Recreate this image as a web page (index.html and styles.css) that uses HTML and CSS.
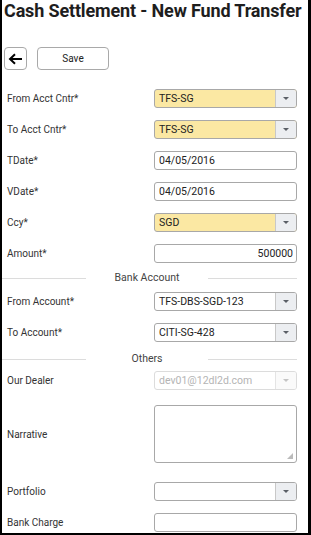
FILE: index.html
```html
<!DOCTYPE html>
<html>
<head>
<meta charset="utf-8">
<link rel="stylesheet" href="styles.css">
</head>
<body>
<div class="frame">
  <h1 class="title">Cash Settlement - New Fund Transfer</h1>
  <div class="toolbar">
    <button class="back" type="button"><svg width="15" height="12" viewBox="0 0 15 12"><path d="M14 6H2.5M7 1.2L2 6l5 4.8" fill="none" stroke="#000" stroke-width="2"/></svg></button>
    <button class="save" type="button">Save</button>
  </div>
  <div class="form">
    <div class="row"><span class="label">From Acct Cntr*</span><div class="field select req"><span class="val">TFS-SG</span><span class="caret"><i></i></span></div></div>
    <div class="row"><span class="label">To Acct Cntr*</span><div class="field select req"><span class="val">TFS-SG</span><span class="caret"><i></i></span></div></div>
    <div class="row"><span class="label">TDate*</span><div class="field"><span class="val">04/05/2016</span></div></div>
    <div class="row"><span class="label">VDate*</span><div class="field"><span class="val">04/05/2016</span></div></div>
    <div class="row"><span class="label">Ccy*</span><div class="field select req"><span class="val">SGD</span><span class="caret"><i></i></span></div></div>
    <div class="row"><span class="label">Amount*</span><div class="field num"><span class="val">500000</span></div></div>
    <div class="divider d1"><span class="line"></span><span class="dtext">Bank Account</span><span class="line"></span></div>
    <div class="row"><span class="label">From Account*</span><div class="field select"><span class="val">TFS-DBS-SGD-123</span><span class="caret"><i></i></span></div></div>
    <div class="row"><span class="label">To Account*</span><div class="field select"><span class="val">CITI-SG-428</span><span class="caret"><i></i></span></div></div>
    <div class="divider d2"><span class="line"></span><span class="dtext">Others</span><span class="line"></span></div>
    <div class="row"><span class="label">Our Dealer</span><div class="field select disabled"><span class="val">dev01@12dl2d.com</span><span class="caret"><i></i></span></div></div>
    <div class="row tall"><span class="label">Narrative</span><div class="field area"><span class="grip"></span></div></div>
    <div class="row"><span class="label">Portfolio</span><div class="field select"><span class="val"></span><span class="caret"><i></i></span></div></div>
    <div class="row"><span class="label">Bank Charge</span><div class="field"><span class="val"></span></div></div>
  </div>
</div>
</body>
</html>
```
FILE: styles.css
```css
html, body {
  margin: 0;
  padding: 0;
  background: #fff;
}
body {
  font-family: Roboto, "Liberation Sans", Arial, sans-serif;
  color: #333;
  overflow: hidden;
}
.frame {
  width: 311px;
  height: 535px;
  box-sizing: border-box;
  border-left: 2px solid #000;
  border-right: 3px solid #000;
  border-bottom: 2px solid #000;
  overflow: hidden;
  position: relative;
}
.title {
  margin: 0;
  padding-left: 2px;
  font-size: 18px;
  line-height: 21px;
  font-weight: 700;
  color: #1e1e1e;
  white-space: nowrap;
  letter-spacing: -0.15px;
}
.toolbar {
  display: flex;
  gap: 10px;
  margin-top: 26px;
  padding-left: 2px;
}
.toolbar button {
  height: 23px;
  box-sizing: border-box;
  border: 1px solid #a9a9a9;
  border-radius: 4px;
  background: #fff;
  padding: 0;
  font-family: Roboto, "Liberation Sans", Arial, sans-serif;
  font-size: 10px;
  color: #222;
}
.back {
  width: 23px;
  display: flex;
  align-items: center;
  justify-content: center;
}
.save {
  width: 72px;
}
.form {
  margin-top: 13px;
}
.row {
  display: grid;
  grid-template-columns: 147px 143px;
  align-items: center;
  padding: 6px 0;
  padding-left: 5px;
}
.row.tall {
  padding-top: 9px;
  padding-bottom: 13px;
}
.label {
  font-size: 10px;
  color: #333;
}
.field {
  height: 19px;
  box-sizing: border-box;
  border: 1px solid #a8a8a8;
  border-radius: 3px;
  background: #fff;
  display: flex;
  align-items: center;
  font-size: 10.5px;
  color: #222;
  overflow: hidden;
}
.field .val {
  flex: 1;
  padding-left: 4px;
  white-space: nowrap;
}
.field.num .val {
  text-align: right;
  padding-right: 3px;
}
.field.req {
  background: #fbe8a3;
}
.caret {
  width: 20px;
  align-self: stretch;
  background: #eceef1;
  border-left: 1px solid #c8c8c8;
  display: flex;
  align-items: center;
  justify-content: center;
}
.caret i {
  width: 0;
  height: 0;
  border-left: 3px solid transparent;
  border-right: 3px solid transparent;
  border-top: 3px solid #5a5f66;
}
.field.disabled {
  border-color: #dcdcdc;
  color: #b4b4b4;
}
.field.disabled .caret {
  background: #fafafa;
  border-left-color: #e4e4e4;
}
.field.disabled .caret i {
  border-top-color: #c4c4c4;
}
.field.area {
  height: 58px;
  position: relative;
}
.grip {
  position: absolute;
  right: 3px;
  bottom: 3px;
  width: 6px;
  height: 6px;
  background:
    radial-gradient(circle, #bbb 0.8px, transparent 1px) 0 0 / 2px 2px;
  clip-path: polygon(100% 0, 100% 100%, 0 100%);
}
.divider {
  display: grid;
  grid-template-columns: 84px 122px 89px;
  align-items: center;
  height: 17px;
  box-sizing: border-box;
  font-size: 10.5px;
  line-height: 12px;
  color: #444;
}
.divider.d1 {
  padding-top: 3px;
  padding-bottom: 2px;
}
.divider.d2 {
  padding-top: 5px;
}
.line {
  height: 1px;
  background: #dcdcdc;
}
.dtext {
  text-align: center;
}
```
